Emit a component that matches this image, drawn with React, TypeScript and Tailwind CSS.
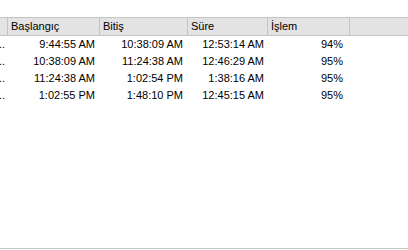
const columns = ["", "Başlangıç", "Bitiş", "Süre", "İşlem", ""];

const rows = [
  ["..", "9:44:55 AM", "10:38:09 AM", "12:53:14 AM", "94%"],
  ["..", "10:38:09 AM", "11:24:38 AM", "12:46:29 AM", "95%"],
  ["..", "11:24:38 AM", "1:02:54 PM", "1:38:16 AM", "95%"],
  ["..", "1:02:55 PM", "1:48:10 PM", "12:45:15 AM", "95%"],
];

const grid = "grid grid-cols-[8px_92px_88px_80px_82px_1fr]";

export default function App() {
  return (
    <div className="w-[408px] h-[250px] bg-white overflow-hidden font-['Tahoma','Liberation_Sans',sans-serif] text-[11px] text-[#000]">
      <div className="h-[249px] border-b border-[#c8c8c8] pt-[17px] flex flex-col">
        <div className={`${grid} h-[19px] bg-[#e3e3e3] border-y border-[#c4c4c4]`}>
          {columns.map((c, i) => (
            <div
              key={i}
              className={`flex items-center pl-[3px] leading-none whitespace-nowrap overflow-hidden ${
                i < columns.length - 1 ? "border-r border-[#c4c4c4]" : ""
              }`}
            >
              {c}
            </div>
          ))}
        </div>
        {rows.map((r, i) => (
          <div key={i} className={`${grid} h-[17px]`}>
            <div className="flex items-center overflow-hidden whitespace-nowrap -ml-[1px]">{r[0]}</div>
            <div className="flex items-center justify-end pr-[5px] whitespace-nowrap">{r[1]}</div>
            <div className="flex items-center justify-end pr-[5px] whitespace-nowrap">{r[2]}</div>
            <div className="flex items-center justify-end pr-[4px] whitespace-nowrap">{r[3]}</div>
            <div className="flex items-center justify-end pr-[7px] whitespace-nowrap">{r[4]}</div>
            <div />
          </div>
        ))}
      </div>
    </div>
  );
}
